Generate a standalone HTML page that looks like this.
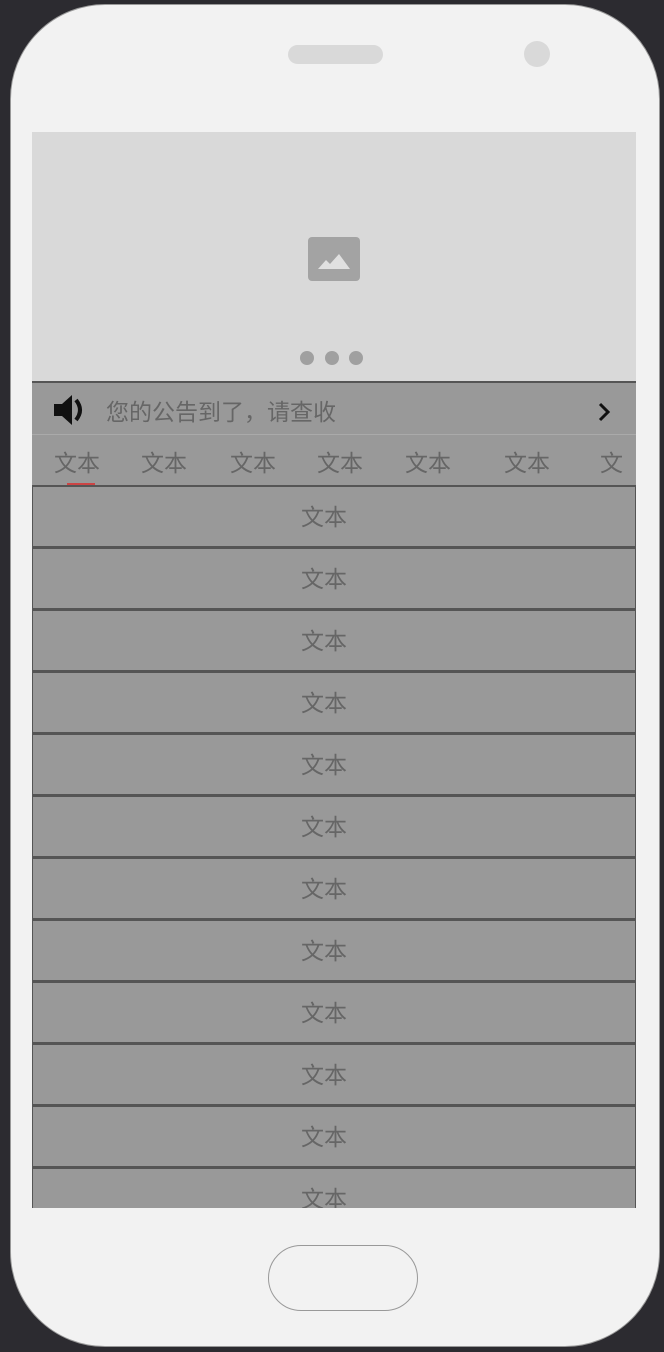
<!DOCTYPE html>
<html><head><meta charset="utf-8"><style>
*{margin:0;padding:0;box-sizing:border-box}
body{width:664px;height:1352px;background:#2c2b30;position:relative;overflow:hidden;font-family:"Liberation Sans","Noto Sans CJK SC",sans-serif}
.phone{position:absolute;left:10px;top:4px;width:650px;height:1343px;background:#f2f2f2;border-radius:95px;border:1.5px solid #999}
.spk{position:absolute;left:288px;top:45px;width:95px;height:19px;border-radius:10px;background:#d9d9d9}
.cam{position:absolute;left:524px;top:41px;width:26px;height:26px;border-radius:50%;background:#d9d9d9}
.screen{position:absolute;left:32px;top:132px;width:604px;height:1076px;overflow:hidden;background:#999}
.banner{position:absolute;left:0;top:0;width:604px;height:249px;background:#d9d9d9}
.dot{position:absolute;top:219px;width:14px;height:14px;border-radius:50%;background:#a0a0a0}
.notice{position:absolute;left:0;top:249px;width:604px;height:54px;background:#999;border-top:2px solid #555;border-bottom:1px solid #aaa}
.notice span{position:absolute;left:74px;top:10px;font-size:23px;color:#666}
.tabs{position:absolute;left:0;top:303px;width:604px;height:51px;background:#999}
.tabs span{position:absolute;top:9px;font-size:23px;color:#666}
.row{position:absolute;left:0;width:604px;height:62px;border:1px solid #555;border-top:2px solid #555;background:#999;text-align:center;font-size:23px;color:#666;line-height:60px;padding-right:20px}
.home{position:absolute;left:268px;top:1245px;width:150px;height:66px;border:1.5px solid #999;border-radius:33px}
</style></head><body>
<div class="phone"></div>
<div class="spk"></div><div class="cam"></div>
<div class="screen">
 <div class="banner">
  <svg style="position:absolute;left:276px;top:105px" width="52" height="44" viewBox="0 0 52 44"><rect width="52" height="44" rx="4" fill="#a3a3a3"/><path d="M10 32 L18 23 L22 27 L31 17 L42 32 Z" fill="#e0e0e0"/></svg>
  <div class="dot" style="left:268px"></div><div class="dot" style="left:293px"></div><div class="dot" style="left:317px"></div>
 </div>
 <div class="notice">
  <svg style="position:absolute;left:21px;top:10px" width="36" height="34" viewBox="0 0 36 34"><path d="M1 11 H9 L19 2 V32 L9 23 H1 Z" fill="#111"/><path d="M23 7 Q31 17 23 27" stroke="#111" stroke-width="4" fill="none"/></svg>
  <span>您的公告到了，请查收</span>
  <svg style="position:absolute;left:565px;top:19px" width="14" height="20" viewBox="0 0 14 20"><path d="M3 2 L11 10 L3 18" stroke="#111" stroke-width="3" fill="none"/></svg>
 </div>
 <div class="tabs">
  <span style="left:22px">文本</span><span style="left:109px">文本</span><span style="left:198px">文本</span><span style="left:285px">文本</span><span style="left:373px">文本</span><span style="left:472px">文本</span><span style="left:568px">文</span>
  <div style="position:absolute;left:35px;top:48px;width:28px;height:3px;background:#c44"></div>
 </div>
 <div class="row" style="top:353px">文本</div>
 <div class="row" style="top:415px">文本</div>
 <div class="row" style="top:477px">文本</div>
 <div class="row" style="top:539px">文本</div>
 <div class="row" style="top:601px">文本</div>
 <div class="row" style="top:663px">文本</div>
 <div class="row" style="top:725px">文本</div>
 <div class="row" style="top:787px">文本</div>
 <div class="row" style="top:849px">文本</div>
 <div class="row" style="top:911px">文本</div>
 <div class="row" style="top:973px">文本</div>
 <div class="row" style="top:1035px">文本</div>
</div>
<div class="home"></div>
</body></html>
